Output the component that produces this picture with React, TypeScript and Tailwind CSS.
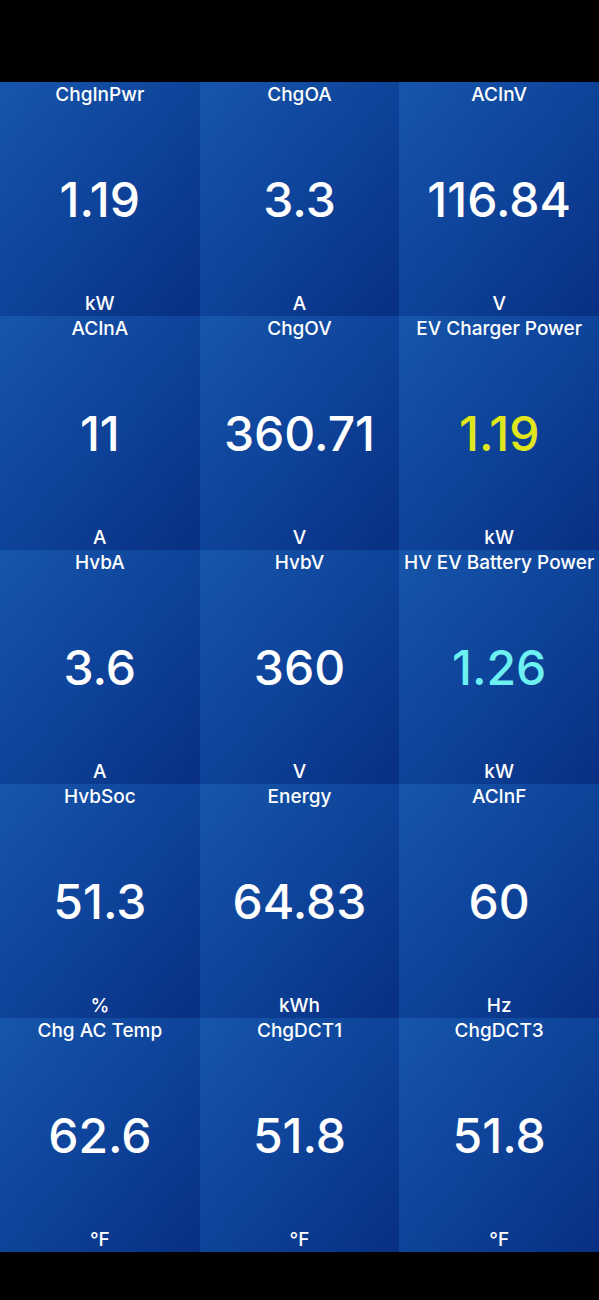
const CELLS = [
  { title: "ChgInPwr", value: "1.19", unit: "kW" },
  { title: "ChgOA", value: "3.3", unit: "A" },
  { title: "ACInV", value: "116.84", unit: "V" },
  { title: "ACInA", value: "11", unit: "A" },
  { title: "ChgOV", value: "360.71", unit: "V" },
  { title: "EV Charger Power", value: "1.19", unit: "kW", tone: "yellow" },
  { title: "HvbA", value: "3.6", unit: "A" },
  { title: "HvbV", value: "360", unit: "V" },
  { title: "HV EV Battery Power", value: "1.26", unit: "kW", tone: "cyan" },
  { title: "HvbSoc", value: "51.3", unit: "%" },
  { title: "Energy", value: "64.83", unit: "kWh" },
  { title: "ACInF", value: "60", unit: "Hz" },
  { title: "Chg AC Temp", value: "62.6", unit: "°F" },
  { title: "ChgDCT1", value: "51.8", unit: "°F" },
  { title: "ChgDCT3", value: "51.8", unit: "°F" },
];

function Gauge({ title, value, unit, tone }: { title: string; value: string; unit: string; tone?: string }) {
  const valueColor =
    tone === "yellow" ? "text-[#e0e61c]" : tone === "cyan" ? "text-[#6cf0f2]" : "text-white";
  return (
    <div className="flex h-[234px] flex-col items-center justify-between bg-gradient-to-br from-[#1656aa] via-[#0e439a] to-[#082f82] pt-[2px] pb-[1px] text-white">
      <div className="whitespace-nowrap text-[19px] leading-[22px] font-medium">{title}</div>
      <div className={`text-[48px] leading-none font-medium ${valueColor}`}>{value}</div>
      <div className="text-[19px] leading-[22px] font-medium">{unit}</div>
    </div>
  );
}

export default function App() {
  return (
    <div className="flex h-[1300px] w-[599px] flex-col bg-black font-['Inter','Liberation_Sans',sans-serif]">
      <div className="h-[82px]" />
      <div className="grid grid-cols-3">
        {CELLS.map((c, i) => (
          <Gauge key={i} {...c} />
        ))}
      </div>
    </div>
  );
}
